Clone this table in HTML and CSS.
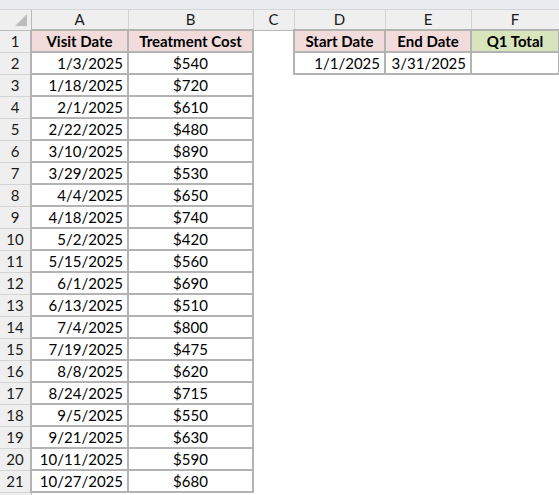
FILE: index.html
```html
<!DOCTYPE html>
<html lang="en">
<head>
<meta charset="UTF-8">
<title>Sheet1</title>
<link rel="stylesheet" href="styles.css">
</head>
<body>
<div class="topbar"></div>
<table class="sheet">
	<colgroup>
		<col class="c-rh"><col class="c-a"><col class="c-b"><col class="c-c"><col class="c-d"><col class="c-e"><col class="c-f">
	</colgroup>
	<tr class="colhead">
		<th class="corner"><span class="tri"></span></th><th>A</th><th>B</th><th>C</th><th>D</th><th>E</th><th>F</th>
	</tr>
	<tr>
		<th>1</th><td class="b pink hd">Visit Date</td><td class="b pink hd">Treatment Cost</td><td></td><td class="b pink hd">Start Date</td><td class="b pink hd">End Date</td><td class="b green hd">Q1 Total</td>
	</tr>
	<tr>
		<th>2</th><td class="b r">1/3/2025</td><td class="b c">$540</td><td></td><td class="b r">1/1/2025</td><td class="b r">3/31/2025</td><td class="b"></td>
	</tr>
	<tr><th>3</th><td class="b r">1/18/2025</td><td class="b c">$720</td><td></td><td></td><td></td><td></td></tr>
	<tr><th>4</th><td class="b r">2/1/2025</td><td class="b c">$610</td><td></td><td></td><td></td><td></td></tr>
	<tr><th>5</th><td class="b r">2/22/2025</td><td class="b c">$480</td><td></td><td></td><td></td><td></td></tr>
	<tr><th>6</th><td class="b r">3/10/2025</td><td class="b c">$890</td><td></td><td></td><td></td><td></td></tr>
	<tr><th>7</th><td class="b r">3/29/2025</td><td class="b c">$530</td><td></td><td></td><td></td><td></td></tr>
	<tr><th>8</th><td class="b r">4/4/2025</td><td class="b c">$650</td><td></td><td></td><td></td><td></td></tr>
	<tr><th>9</th><td class="b r">4/18/2025</td><td class="b c">$740</td><td></td><td></td><td></td><td></td></tr>
	<tr><th>10</th><td class="b r">5/2/2025</td><td class="b c">$420</td><td></td><td></td><td></td><td></td></tr>
	<tr><th>11</th><td class="b r">5/15/2025</td><td class="b c">$560</td><td></td><td></td><td></td><td></td></tr>
	<tr><th>12</th><td class="b r">6/1/2025</td><td class="b c">$690</td><td></td><td></td><td></td><td></td></tr>
	<tr><th>13</th><td class="b r">6/13/2025</td><td class="b c">$510</td><td></td><td></td><td></td><td></td></tr>
	<tr><th>14</th><td class="b r">7/4/2025</td><td class="b c">$800</td><td></td><td></td><td></td><td></td></tr>
	<tr><th>15</th><td class="b r">7/19/2025</td><td class="b c">$475</td><td></td><td></td><td></td><td></td></tr>
	<tr><th>16</th><td class="b r">8/8/2025</td><td class="b c">$620</td><td></td><td></td><td></td><td></td></tr>
	<tr><th>17</th><td class="b r">8/24/2025</td><td class="b c">$715</td><td></td><td></td><td></td><td></td></tr>
	<tr><th>18</th><td class="b r">9/5/2025</td><td class="b c">$550</td><td></td><td></td><td></td><td></td></tr>
	<tr><th>19</th><td class="b r">9/21/2025</td><td class="b c">$630</td><td></td><td></td><td></td><td></td></tr>
	<tr><th>20</th><td class="b r">10/11/2025</td><td class="b c">$590</td><td></td><td></td><td></td><td></td></tr>
	<tr><th>21</th><td class="b r">10/27/2025</td><td class="b c">$680</td><td></td><td></td><td></td><td></td></tr>
	<tr class="tail"><th></th><td></td><td></td><td></td><td></td><td></td><td></td></tr>
</table>
</body>
</html>
```

FILE: styles.css
```css
* {
	margin: 0;
	padding: 0;
	box-sizing: border-box;
}
html, body {
	height: 100%;
	overflow: hidden;
	background: #fff;
}
body {
	font: 15px/1 Lato, "Open Sans", sans-serif;
	color: #000;
}
.topbar {
	height: 10px;
	background: #e8ecf0;
	border-bottom: 1px solid #d6d6d6;
}
.sheet {
	border-collapse: collapse;
	table-layout: fixed;
	width: 559px;
}
.c-rh { width: 31px; }
.c-a { width: 97px; }
.c-b { width: 125px; }
.c-c { width: 41px; }
.c-d { width: 91px; }
.c-e { width: 86px; }
.c-f { width: 88px; }

.sheet tr {
	height: 22px;
}
.sheet tr.colhead {
	height: 20px;
}
.sheet th {
	background: #efefef;
	font-weight: normal;
	text-align: center;
	border: 1px solid #d4d4d4;
	border-left: none;
	color: #1a1a1a;
}
.colhead th {
	border-top: none;
	border-bottom: 1px solid #b8b8b8;
}
.sheet tr th:first-child {
	border-right: 1px solid #b8b8b8;
}
.corner {
	position: relative;
}
.tri {
	position: absolute;
	right: 4px;
	bottom: 4px;
	width: 0;
	height: 0;
	border-left: 12px solid transparent;
	border-bottom: 12px solid #bdbdbd;
}
.sheet td {
	white-space: nowrap;
	overflow: hidden;
	padding: 0 4px;
}
.sheet td.b {
	border: 2px solid #b3b3b3;
}
.pink {
	background: #f2dcdb;
}
.green {
	background: #d8e4bc;
}
.hd {
	font-weight: bold;
	text-align: center;
}
.r {
	text-align: right;
}
.c {
	text-align: center;
}
```
